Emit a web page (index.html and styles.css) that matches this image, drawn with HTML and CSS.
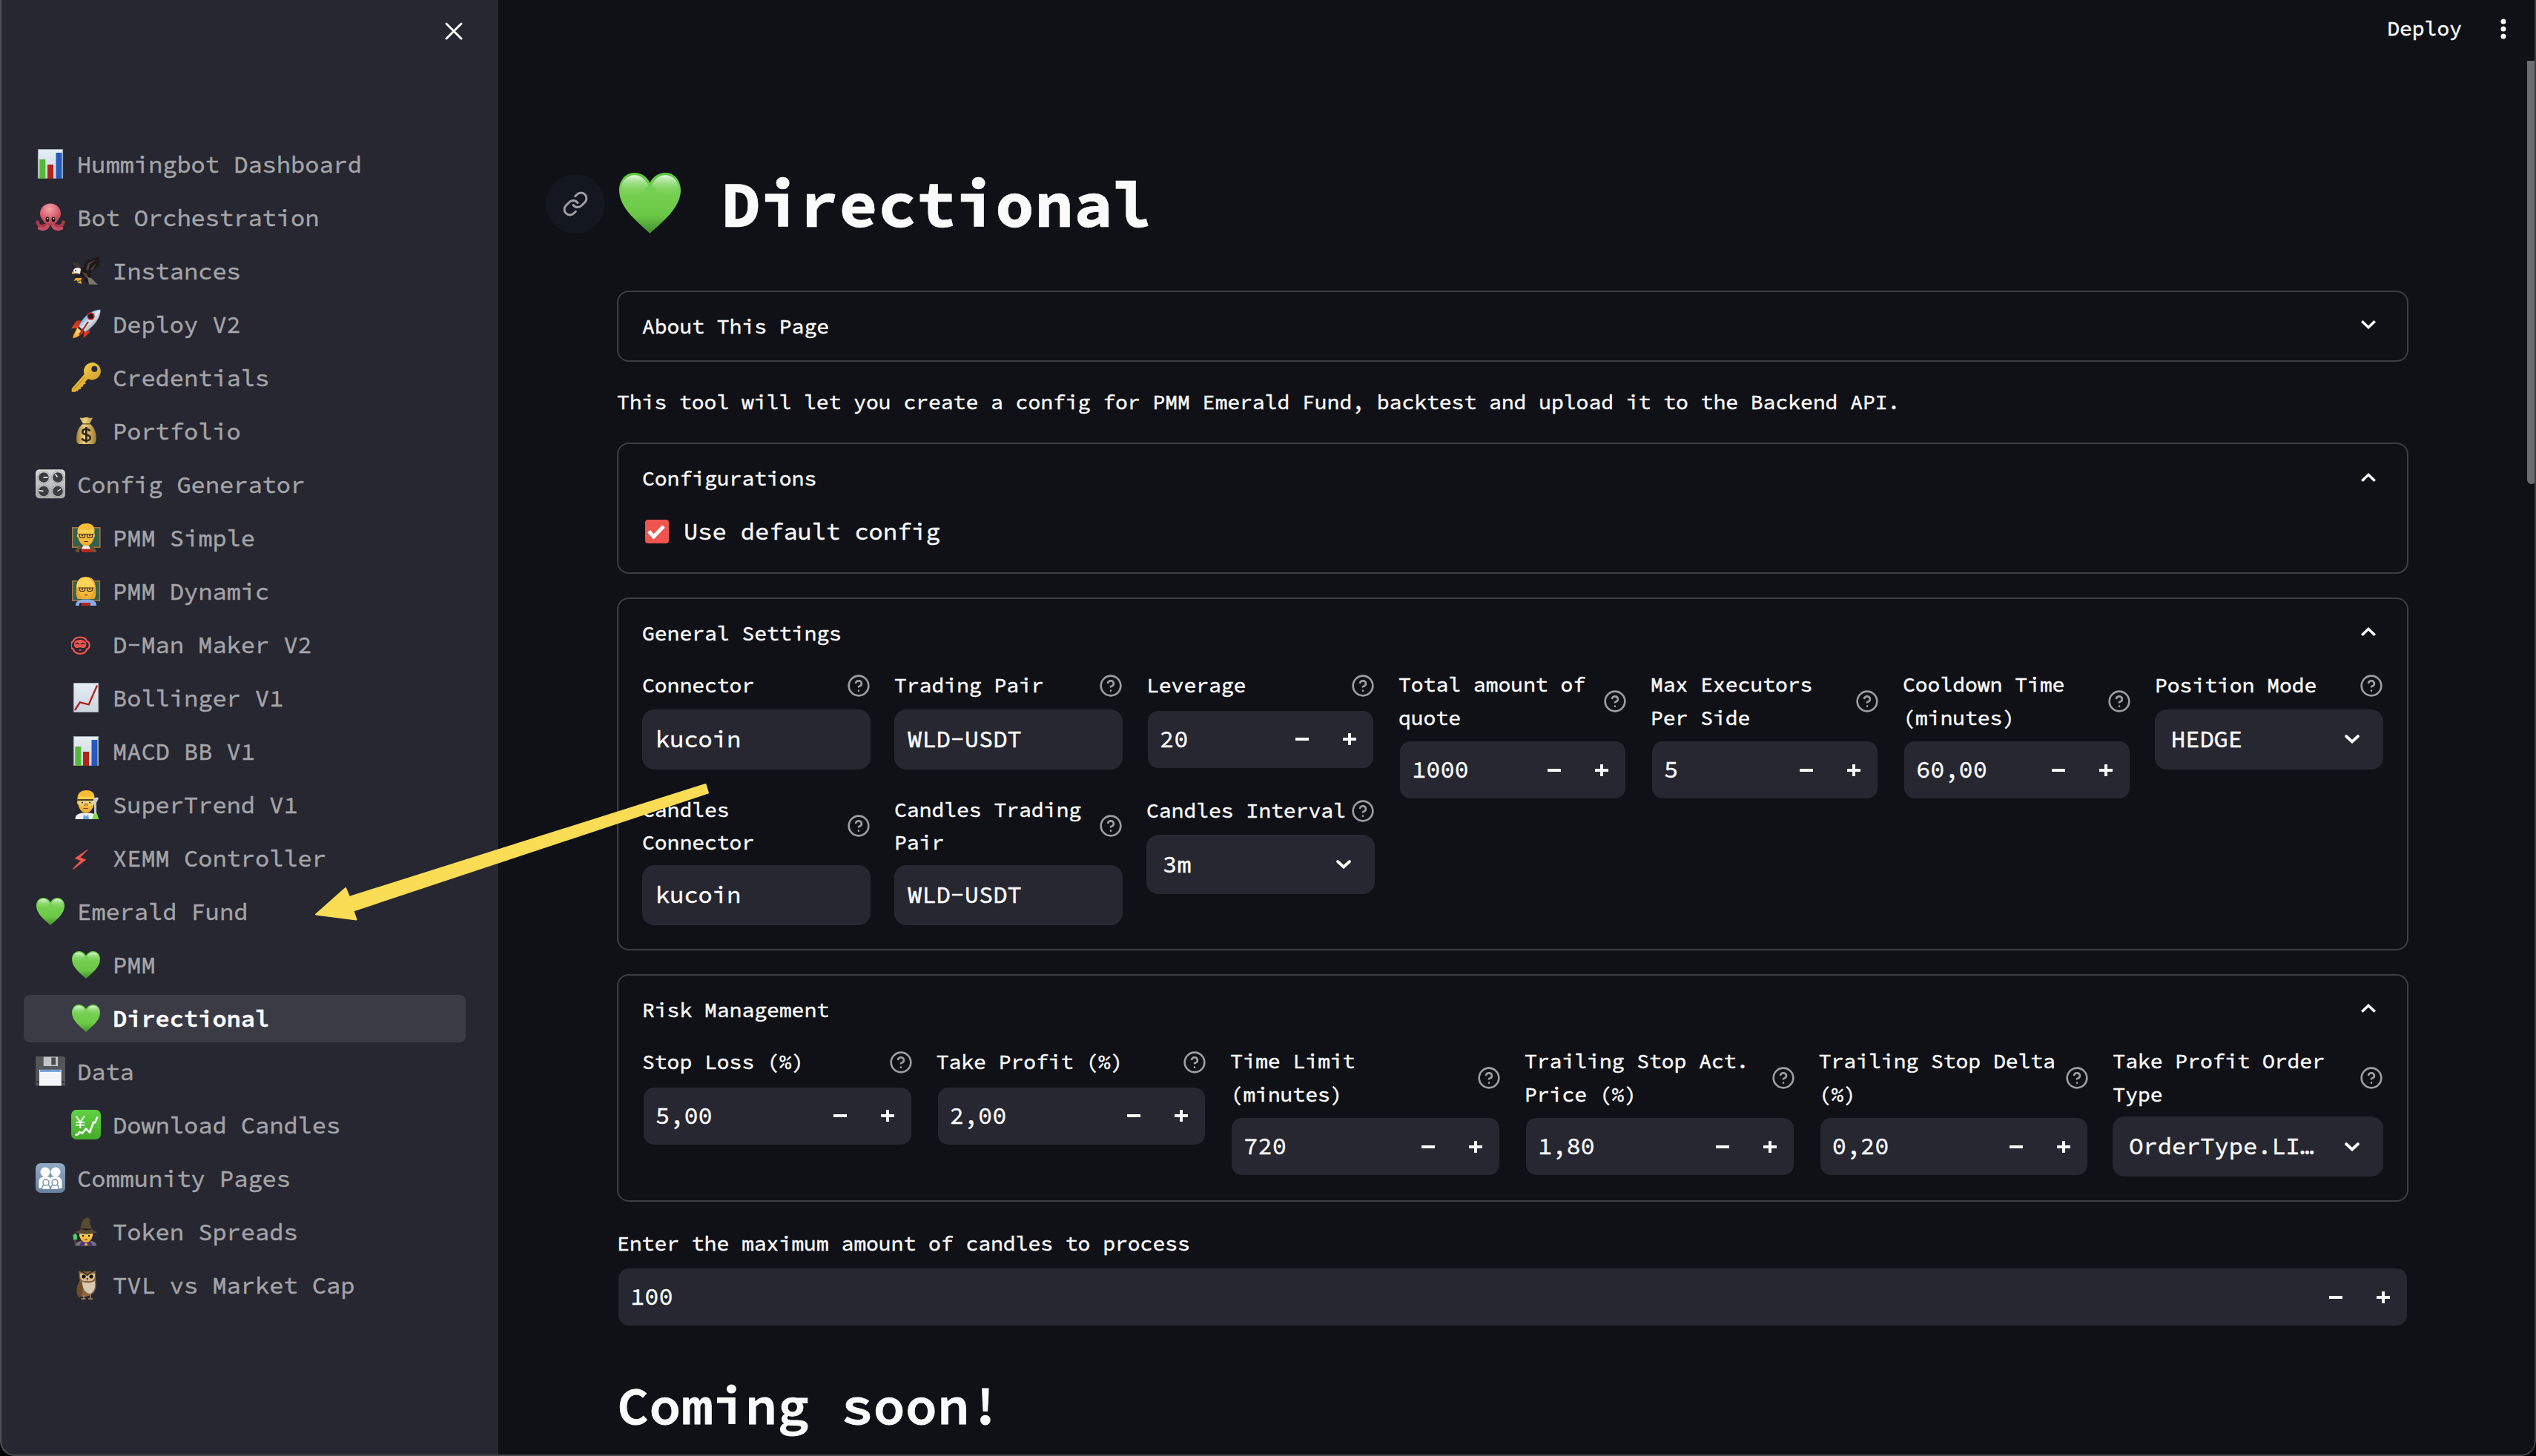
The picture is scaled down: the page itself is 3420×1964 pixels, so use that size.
FILE: index.html
```
<!DOCTYPE html>
<html lang="en">
<head>
<meta charset="utf-8">
<title>Directional</title>
<link rel="stylesheet" href="styles.css">
</head>
<body>
<svg class="defs" aria-hidden="true">
  <defs>
    <linearGradient id="paper" x1="0" y1="0" x2="0" y2="1"><stop offset="0" stop-color="#e6edf5"/><stop offset="1" stop-color="#ccd6df"/></linearGradient>
    <radialGradient id="pink" cx=".45" cy=".25" r=".8"><stop offset="0" stop-color="#f4a3ab"/><stop offset=".55" stop-color="#d9606f"/><stop offset="1" stop-color="#a93549"/></radialGradient>
    <linearGradient id="gold" x1="0" y1="0" x2="1" y2="1"><stop offset="0" stop-color="#fbdc55"/><stop offset="1" stop-color="#c98f1c"/></linearGradient>
    <linearGradient id="sack" x1="0" y1="0" x2="1" y2="0"><stop offset="0" stop-color="#a57b2e"/><stop offset=".4" stop-color="#efd586"/><stop offset="1" stop-color="#a57b2e"/></linearGradient>
    <linearGradient id="metal" x1="0" y1="0" x2="0" y2="1"><stop offset="0" stop-color="#d4d6d8"/><stop offset="1" stop-color="#a9abad"/></linearGradient>
    <linearGradient id="skin" x1="0" y1="0" x2="0" y2="1"><stop offset="0" stop-color="#ffdf64"/><stop offset="1" stop-color="#f0ab2b"/></linearGradient>
    <linearGradient id="hull" x1="0" y1="0" x2="1" y2="1"><stop offset=".2" stop-color="#4a8fd8"/><stop offset=".5" stop-color="#e3ecf4"/><stop offset=".8" stop-color="#8599a8"/></linearGradient>
    <linearGradient id="flame" x1="1" y1="0" x2="0" y2="1"><stop offset="0" stop-color="#fff6b0"/><stop offset="1" stop-color="#f7a21c"/></linearGradient>
    <linearGradient id="fin" x1="1" y1="0" x2="0" y2="1"><stop offset="0" stop-color="#b81c18"/><stop offset="1" stop-color="#ff5a24"/></linearGradient>
    <linearGradient id="leaf" x1="0" y1="0" x2="0" y2="1"><stop offset="0" stop-color="#5cc93f"/><stop offset=".3" stop-color="#77d153"/><stop offset=".7" stop-color="#6bc846"/><stop offset="1" stop-color="#3f8f2e"/></linearGradient>
    <linearGradient id="shine" x1="0" y1="0" x2="0" y2="1"><stop offset="0" stop-color="#eefbe8" stop-opacity=".95"/><stop offset="1" stop-color="#77d153" stop-opacity="0"/></linearGradient>
    <linearGradient id="slate" x1="0" y1="0" x2="0" y2="1"><stop offset="0" stop-color="#91aac6"/><stop offset="1" stop-color="#6a829c"/></linearGradient>
    <linearGradient id="green" x1="0" y1="0" x2="0" y2="1"><stop offset="0" stop-color="#62d145"/><stop offset="1" stop-color="#45ab2c"/></linearGradient>
  </defs>
  <symbol id="bars" viewBox="0 0 40 40">
    <path fill="url(#paper)" stroke="#a4adb5" stroke-width=".8" d="M3.4.4h33.2v39.2H3.4z"/>
    <path fill="#55b937" d="M5.3 14h8v26h-8z"/><path fill="#b1241a" d="M16 21h8v19h-8z"/><path fill="#2459be" d="M27.5 5h8v35h-8z"/>
  </symbol>
  <symbol id="line-chart" viewBox="0 0 40 40">
    <path fill="url(#paper)" stroke="#a4adb5" stroke-width=".8" d="M3.4.4h33.2v39.2H3.4z"/>
    <path fill="none" stroke="#b1241a" stroke-width="2.4" d="M5 37l6.8-10.600 11.900 3L35 3.500"/>
  </symbol>
  <symbol id="octopus" viewBox="0 0 40 40">
    <path fill="none" stroke="#a9384b" stroke-width="4.500" stroke-linecap="round" d="M2.500 26.500c1 6 7 7 12 4M37.500 26.500c-1 6-7 7-12 4"/>
    <path fill="none" stroke="#c25061" stroke-width="4.500" stroke-linecap="round" d="M5 34.800c5 2.500 10 1 12-4M35 34.800c-5 2.500-10 1-12-4"/>
    <path fill="url(#pink)" d="M20 1.500c8.500 0 14 6.500 14 13.500 0 5-2.500 7-4.500 10-2 3.500-5.500 6-9.500 6s-7.500-2.500-9.500-6C8.500 22 6 20 6 15 6 8 11.500 1.500 20 1.500z"/>
    <ellipse cx="16" cy="22.800" rx="2.400" ry="3.400" fill="#1d1014"/><ellipse cx="24" cy="22.800" rx="2.400" ry="3.400" fill="#1d1014"/>
    <circle cx="16.500" cy="22" r=".9" fill="#fff"/><circle cx="24.500" cy="22" r=".9" fill="#fff"/>
  </symbol>
  <symbol id="eagle" viewBox="0 0 40 40">
    <path fill="#3f332e" d="M14 20C12 16 4 15 .5 8.500L4 10 3.500 8l4 2.500L8 8.500l3 3 3 8.500z"/>
    <path fill="#1e1918" d="M13 21L17 15 20 8C24 5 32 3 39 .5L36 4l4 .5-3.500 2.500 3.500.5-3.500 2.500 3 1.500-4 1 2.500 2-4.500.5 1.500 2.500-5 .5-3 5-1 7 2 7-8-1-3-7-6-2z"/>
    <path fill="#54443d" d="M20 18l3-8 10-5-8 7-2 9zM26 18l8-8-6 10zM15 22l6 2 3 7-5-2z"/>
    <path fill="#7d756d" d="M22 29l5 1 9 9-12-.5z"/>
    <path fill="#f2f0ea" d="M3 19c3-4 8-3.500 10-1l-1 6.500-6-1-3 1z"/><circle cx="6" cy="20" r=".9" fill="#222"/>
    <path fill="#e9aa2b" d="M4 20l-3 2v3l3-2zM14 30l-8 0-2.500 4 4-1 1 2 5.500-3zM13 33l-5 4h3l3 1z"/>
  </symbol>
  <symbol id="rocket" viewBox="0 0 40 40">
    <path fill="url(#fin)" d="M15.500 15.500H7.500L0 26l10-1zM25.500 25l-1 7-8 7 1-9z"/>
    <path fill="url(#flame)" stroke="#ee7c1b" stroke-width=".8" d="M8 25c-1 5-5 8-5.500 14C8 38 12 35 15.500 31z"/>
    <path fill="url(#hull)" stroke="#35506e" stroke-width=".5" d="M39.500.8C40 10 33 22 19 31l-9-8C17 8 29 .5 39.500.8z"/>
    <path fill="#bd2118" d="M22 16.500l2 1L12 35l-2-1z"/>
    <circle cx="26.500" cy="9.500" r="5.200" fill="#d52b24"/><circle cx="26.500" cy="9.500" r="3.600" fill="#211b20"/>
  </symbol>
  <symbol id="key" viewBox="0 0 40 40">
    <path fill="url(#gold)" fill-rule="evenodd" d="M28.300 0a11.700 11.700 0 1 1-5.500 22.100l-3.800 4 .5 3-3 .5-.5 3-3 .5 0 3-3 .2-1 2.500-2-.6-1.500 1.600H.7v-4.500l17-19.500A11.700 11.700 0 0 1 28.300 0zm3 4.700a4 4 0 1 0 0 8 4 4 0 0 0 0-8z"/>
    <path stroke="#a3741a" stroke-width="1" d="M3 36.500L18.500 20"/>
  </symbol>
  <symbol id="money" viewBox="0 0 40 40">
    <path fill="url(#sack)" d="M11.500 3c2-1.500 4 .5 6-.5s4-1 6 0 4-1 5.500.5L25 10.500c6 4 9 12 8.700 20 0 5-1.700 7.500-4.700 7.500H12c-3.500 0-5-2-5-7.500 0-8 3-16 9-20z"/>
    <path stroke="#84601f" stroke-width="1.600" d="M15.500 10.800h9.500"/>
    <path fill="none" stroke="#2d2415" stroke-width="2.600" d="M25.300 20.500c-1-2-3-2.700-5-2.700-3 0-5 1.500-5 3.800 0 5.400 10.500 2.400 10.500 7.800 0 2.400-2.300 4-5.500 4-2.800 0-4.800-1-5.800-3.200M20.300 15v21"/>
  </symbol>
  <symbol id="knobs" viewBox="0 0 40 40">
    <rect y=".2" width="40" height="39" rx="5" fill="url(#metal)"/>
    <g fill="none" stroke="#777a7d" stroke-width="1" stroke-dasharray="1 1.500"><circle cx="11" cy="11" r="8.300"/><circle cx="30" cy="11" r="8.300"/><circle cx="11" cy="29.500" r="8.300"/><circle cx="30" cy="29.500" r="8.300"/></g>
    <g fill="#3b3d40"><circle cx="11" cy="11" r="6.800"/><circle cx="30" cy="11" r="6.800"/><circle cx="11" cy="29.500" r="6.800"/><circle cx="30" cy="29.500" r="6.800"/></g>
    <path stroke="#fff" stroke-width="1.400" d="M10.500 11h6M29.500 10.500l-3-4M10.500 29.500l-6-1M29.500 29.500l5-3"/>
  </symbol>
  <symbol id="teacher-m" viewBox="0 0 40 40">
    <path fill="#35604c" stroke="#a9744a" stroke-width="1.600" d="M1.800 6.800h37v26.500h-37z"/>
    <path fill="#6a5129" d="M6 40c0-6 4-7.500 9-8.500h10c5 1 9 2.500 9 8.500z"/><path fill="#f3f0e8" d="M16 31h8l2 5H14z"/>
    <path fill="url(#skin)" d="M9 15C8 6 13 3 20 3s12 3 11 12c1.500 0 1.300 5-.5 5.500C29 27 25 31.500 20 31.500S11 27 9.500 20.500C7.700 20 7.500 15 9 15z"/>
    <path fill="#f4bd37" d="M8.800 15C7 5 13 1 21 1c8 0 12 5 10.200 14-1-3-2-5-3.200-6-6 2-12 1-15 0-2 1-3 3-4.200 6z"/>
    <path fill="none" stroke="#3c2712" stroke-width="1.200" d="M9.500 15.500h21M11.500 15.500v3.500c0 2 7 2 7 0v-3.500M21.500 15.500v3.500c0 2 7 2 7 0v-3.500M17.500 25.500h5"/>
    <circle cx="15" cy="17.500" r="1.100" fill="#2d1c0c"/><circle cx="25" cy="17.500" r="1.100" fill="#2d1c0c"/>
    <path fill="#b92323" d="M12.500 35.500H27V40H13.500z"/><path fill="#1e1b1b" d="M11 36.500l2-1 .8 4.500H11z"/>
  </symbol>
  <symbol id="teacher-f" viewBox="0 0 40 40">
    <path fill="#35604c" stroke="#a9744a" stroke-width="1.600" d="M1.800 6.800h36.500v26.500H1.800z"/>
    <path fill="#e7a62c" d="M20 1c9 0 12 5 13 14 .5 8 .5 13-2 16H9c-2.500-3-2.500-8-2-16C8 6 11 1 20 1z"/>
    <path fill="#86aeea" d="M6 40c0-6 4-7.500 9-8.500h10c5 1 9 2.500 9 8.500z"/>
    <path fill="url(#skin)" d="M10 15c3-2 8-5 10-9 2 5 6 7 10 9 0 9-4 16-10 16s-10-7-10-16z"/>
    <path fill="#ffd557" d="M17 2c6-1 13 3 15 13-6-1-10-4-12-8-3 5-7 7-13 9C7 9 10 3 17 2z"/>
    <path fill="none" stroke="#3c2712" stroke-width="1.200" d="M10 16h20M11.500 16v3c0 2 7 2 7 0v-3M21.500 16v3c0 2 7 2 7 0v-3"/>
    <circle cx="15" cy="17.800" r="1.100" fill="#2d1c0c"/><circle cx="25" cy="17.800" r="1.100" fill="#2d1c0c"/><path stroke="#9a3b22" stroke-width="1.500" d="M18 25.500h4"/>
    <path fill="#b92323" d="M12.500 36H26v4H13.500z"/><path fill="#1e1b1b" d="M11 37l2-1 .8 4H11z"/>
  </symbol>
  <symbol id="scientist" viewBox="0 0 40 40">
    <path fill="#eceef0" d="M5.500 40c0-6 4-7 9-8.500h11c6 1.500 9 2.500 9 8.500z"/><path fill="#6fa3e0" d="M17 34l3 2 3-2 1 6h-8z"/>
    <path fill="url(#skin)" d="M9 15C8 6 13 3 20 3s12 3 11 12c1.500 0 1.300 5-.5 5.500C29 27 25 31.500 20 31.500S11 27 9.500 20.500C7.700 20 7.500 15 9 15z"/>
    <path fill="#f4bd37" d="M8.800 15C7 5 13 1 21 1c8 0 12 5 10.200 14-1-3-2-5-3.200-6-6 2-12 1-15 0-2 1-3 3-4.200 6z"/>
    <path fill="#e6d48c" fill-opacity=".7" d="M10 14h20v6l-4 2h-4l-2-3-2 3h-4l-4-2z"/><path stroke="#2d2113" stroke-width="1.700" d="M9 14h22"/>
    <circle cx="15" cy="17.500" r="1.100" fill="#2d1c0c"/><circle cx="25" cy="17.500" r="1.100" fill="#2d1c0c"/><path fill="none" stroke="#7d4a1c" stroke-width="1.100" d="M18 22l1-2.500h2l1 2.500M16.500 25.500h6"/>
    <path fill="#d9dcdf" fill-opacity=".9" d="M30 13c2-3 6-3 7-1l-3 6v13l3 9h-9l3-9V20c-2-1-2-4-1-7z"/><path fill="#76e03c" d="M31 33h4l2.200 7H28z"/>
  </symbol>
  <symbol id="robot-face" viewBox="0 0 40 40">
    <path fill="none" stroke="#f0544f" stroke-width="2.200" d="M12 10.700c4.500 0 8 2 9.200 5.300 2.600.6 3.400 2.500 3.400 5.300s-.8 4.800-3.400 5.300C20 30.500 16.500 32.800 12 32.800s-8-2.300-9.200-6.200C.2 26.100-.1 24 0 21.300c0-2.800.2-4.700 2.800-5.300C4 12.700 7.500 10.700 12 10.700z"/>
    <path fill="#f0544f" d="M12 14c5.500 0 8.300 2.500 8.300 6s-1.800 5-3.800 5-2.500-.8-4.500-.8-2.500.8-4.500.8-3.800-1.500-3.800-5 2.800-6 8.300-6zM9.800 27.300h4.400c-.4 2-4 2-4.400 0z"/>
    <path fill="none" stroke="#262730" stroke-width="1.500" d="M6 20.500c.8-2.600 3.600-2.600 4.400 0M13.600 20.500c.8-2.600 3.600-2.600 4.400 0"/>
  </symbol>
  <symbol id="bolt" viewBox="0 0 40 40"><path fill="#f0544f" stroke="#f0544f" stroke-width=".6" d="M22 9L5 20.800l8 3L2.300 34.800l1 .4 16.500-12.400-7.800-3L22.300 9.300z"/></symbol>
  <symbol id="heart" viewBox="1 2 38 36.500" preserveAspectRatio="none">
    <path fill="url(#leaf)" d="M20 38.500C13 32 1 23.500 1 12.500 1 6.500 5 2 10.500 2c4 0 7.500 2.300 9.500 6 2-3.700 5.500-6 9.500-6C35 2 39 6.500 39 12.500 39 23.500 27 32 20 38.500z"/>
    <path fill="url(#shine)" d="M10.500 3.500c4 0 7 2.800 8.500 6.500-3 2-5 6-9 6s-7.500-1-7.500-5c0-4.500 4-7.500 8-7.500zM29.500 3.500c-4 0-7 2.800-8.500 6.500 3 2 5 6 9 6s7.500-1 7.500-5c0-4.500-4-7.500-8-7.500z"/>
  </symbol>
  <symbol id="floppy" viewBox="0 0 40 40">
    <path fill="#55565a" d="M0 0h38l2 2v37.600H0z"/><path fill="#c2c4c7" d="M10.700.5H30V13H10.700z"/><path fill="#4a4b4f" d="M21.300 1.500H27V11.500h-5.700z"/>
    <path fill="#f3f4f6" d="M5 17.900h29.700v21.700H5z"/><path fill="#5a94d2" d="M6 18.300h27.700v2.500H6z"/><path fill="#333438" d="M1.500 33H4v3H1.500zM36 33h2.500v3H36z"/>
  </symbol>
  <symbol id="yen-chart" viewBox="0 0 40 40">
    <rect width="40" height="40" rx="7" fill="url(#green)"/>
    <path fill="none" stroke="#fff" stroke-width="1.800" d="M6.500 8.500l5.700 8 5.700-8M12.200 16v9M6.500 17h11.500M6.500 20.700h11.500"/>
    <path fill="none" stroke="#fff" stroke-width="2.500" stroke-linejoin="round" d="M5.500 34l4-1 1.500-3 4 1.500 5-6 5 5 3-8 2-6 2 1 3.500-8"/>
  </symbol>
  <symbol id="family" viewBox="0 0 40 40">
    <rect width="40" height="40" rx="7" fill="url(#slate)"/>
    <g fill="#fff"><circle cx="13" cy="12" r="6.500"/><circle cx="27" cy="12" r="6.500"/><path d="M4.500 34V25c0-5 3.500-7 8.500-7 3 0 5.500.5 7 2 1.500-1.500 4-2 7-2 5 0 8.500 2 8.500 7v9z"/></g>
    <g fill="#fff" stroke="#7088a4" stroke-width="1.300"><path d="M8.500 35.500c0-5 2-7 5.500-7s5.700 2 5.700 7zM20.300 35.500c0-5 2-7 5.700-7s5.500 2 5.500 7z"/><circle cx="14" cy="26" r="4"/><circle cx="26" cy="26" r="4"/></g>
  </symbol>
  <symbol id="wizard" viewBox="0 0 40 40">
    <path fill="#77727f" d="M6 39.500c0-5 4-6 9-7h10c5 1 9 2 9 7z"/><path fill="#4f3277" d="M14 33h12l3 6.500h-4l-5-3-5 3h-4z"/><path fill="#e7b43a" d="M18.500 36h3v3h-3z"/>
    <path fill="url(#skin)" d="M11 20h18c1 8-3 15-9 15s-10-7-9-15z"/><path fill="#c7cdd4" d="M10.500 21h4l-2 5zM29.500 21h-4l2 5z"/>
    <circle cx="16" cy="26" r="1.200" fill="#2b1c0e"/><circle cx="24" cy="26" r="1.200" fill="#2b1c0e"/><path stroke="#8d4a1d" stroke-width="1.300" d="M18 31h4"/>
    <path fill="#594a35" d="M4.500 21c3-1 6-2 8-4C13 10 15 3 21 1.500c3 0 5 2 6 5l-3-1c2 4 3 9 4 11.500 2 2 5 3 7.500 4-8 3.500-22 3.500-31 0z"/><path stroke="#3c3021" stroke-width="1.300" d="M12.500 16.500c4 2 11 2 15.500.3"/>
    <path stroke="#6f4b2c" stroke-width="2" d="M5 31l1 8.500"/><path fill="#4bcf6c" d="M2.500 25l3-2.500 2.500 3v5.500l-5 .5z"/>
  </symbol>
  <symbol id="owl" viewBox="0 0 40 40">
    <path fill="#8b6543" d="M10 1c3 1.500 16 1.500 23 0-1 3 0 7 0 10 1 8 1.500 15-3 20-4 4-13 7-18 4C6 31 7 21 12 14c-2-4-1-9-2-13z"/>
    <path fill="#d9cab4" d="M15 16c5 2 12 2 17-1 1 9-1 14-6 17-6 0-11-6-11-16z"/><path fill="#6f4a2b" d="M12 15c4 7 5 12 2 19l-3 4c-5-6-5-15 1-23z"/>
    <path fill="#d3bb95" d="M12 5c4-1 6 0 9.500 4C24 5 28 4 32 5c1 7-3 10-6 10h-8c-4 0-7-4-6-10z"/>
    <circle cx="17" cy="9" r="3" fill="#c98a2a"/><circle cx="27" cy="9" r="3" fill="#c98a2a"/><circle cx="17" cy="9" r="2.400" fill="#14100d"/><circle cx="27" cy="9" r="2.400" fill="#14100d"/>
    <path fill="#3a2a1c" d="M10 1c5 0 9 2 11.700 5C24.500 3 28 1 33 1c-4 2-8 3-11.300 7C18 4 14 3 10 1zM20.500 11h2.400l-1.200 4z"/>
    <path stroke="#a88a60" stroke-width="1.500" d="M17 34v4.500M26 33v5.500M13.500 39h6M23 39h6"/>
  </symbol>
  <symbol id="help" viewBox="0 0 24 24"><g fill="none" stroke="#9c9da0" stroke-width="2" stroke-linecap="round" stroke-linejoin="round"><circle cx="12" cy="12" r="10"/><path d="M9.090 9a3 3 0 0 1 5.830 1c0 2-3 3-3 3M12 17h.01"/></g></symbol>
  <symbol id="down" viewBox="0 0 20 12"><path fill="#fafafa" d="M0 2.600L2.600 0 10 7.200 17.400 0 20 2.600 10 12z"/></symbol>
  <symbol id="caret" viewBox="0 0 20 12"><path fill="none" stroke="#fafafa" stroke-width="4" stroke-linecap="round" d="M2.200 2.200L10 9.400l7.800-7.200"/></symbol>
  <symbol id="minus" viewBox="0 0 18 18"><path fill="#fafafa" d="M0 7h18v4H0z"/></symbol>
  <symbol id="plus" viewBox="0 0 18 18"><path fill="#fafafa" d="M0 7h7V1h4v6h7v4h-7v6H7v-6H0z"/></symbol>
</svg>

<div class="app">
  <aside class="sidebar">
    <div class="sidebar-head"><svg class="close" viewBox="0 0 24 24"><path d="M2 2l20 20M22 2L2 22"/></svg></div>
    <nav class="nav">
      <a class="item"><svg><use href="#bars"/></svg>Hummingbot Dashboard</a>
      <a class="item"><svg><use href="#octopus"/></svg>Bot Orchestration</a>
      <a class="item sub"><svg><use href="#eagle"/></svg>Instances</a>
      <a class="item sub"><svg><use href="#rocket"/></svg>Deploy V2</a>
      <a class="item sub"><svg><use href="#key"/></svg>Credentials</a>
      <a class="item sub"><svg><use href="#money"/></svg>Portfolio</a>
      <a class="item"><svg><use href="#knobs"/></svg>Config Generator</a>
      <a class="item sub"><svg><use href="#teacher-m"/></svg>PMM Simple</a>
      <a class="item sub"><svg><use href="#teacher-f"/></svg>PMM Dynamic</a>
      <a class="item sub"><svg><use href="#robot-face"/></svg>D-Man Maker V2</a>
      <a class="item sub"><svg><use href="#line-chart"/></svg>Bollinger V1</a>
      <a class="item sub"><svg><use href="#bars"/></svg>MACD BB V1</a>
      <a class="item sub"><svg><use href="#scientist"/></svg>SuperTrend V1</a>
      <a class="item sub"><svg><use href="#bolt"/></svg>XEMM Controller</a>
      <a class="item"><svg class="love"><use href="#heart"/></svg>Emerald Fund</a>
      <a class="item sub"><svg class="love"><use href="#heart"/></svg>PMM</a>
      <a class="item sub active"><svg class="love"><use href="#heart"/></svg>Directional</a>
      <a class="item"><svg><use href="#floppy"/></svg>Data</a>
      <a class="item sub"><svg><use href="#yen-chart"/></svg>Download Candles</a>
      <a class="item"><svg><use href="#family"/></svg>Community Pages</a>
      <a class="item sub"><svg><use href="#wizard"/></svg>Token Spreads</a>
      <a class="item sub"><svg><use href="#owl"/></svg>TVL vs Market Cap</a>
    </nav>
  </aside>

  <main class="main">
    <header class="toolbar">
      <span>Deploy</span>
      <svg class="dots" viewBox="0 0 8 28"><circle cx="4" cy="4" r="3.500"/><circle cx="4" cy="14" r="3.500"/><circle cx="4" cy="24" r="3.500"/></svg>
    </header>

    <div class="content">
      <h1 class="title">
        <span class="anchor"><svg viewBox="0 0 24 24"><path d="M10 13a5 5 0 0 0 7.540.540l3-3a5 5 0 0 0-7.070-7.070l-1.720 1.710"/><path d="M14 11a5 5 0 0 0-7.540-.540l-3 3a5 5 0 0 0 7.070 7.070l1.710-1.710"/></svg></span>
        <svg class="title-heart"><use href="#heart"/></svg>Directional
      </h1>

      <section class="expander"><div class="summary">About This Page<svg><use href="#down"/></svg></div></section>

      <p class="intro">This tool will let you create a config for PMM Emerald Fund, backtest and upload it to the Backend API.</p>

      <section class="expander">
        <div class="summary open">Configurations<svg><use href="#down"/></svg></div>
        <div class="panel"><div class="check"><svg viewBox="0 0 32 32"><path d="M5 15.500l6.500 7.500L25 9"/></svg>Use default config</div></div>
      </section>

      <section class="expander">
        <div class="summary open">General Settings<svg><use href="#down"/></svg></div>
        <div class="panel columns">
          <div class="col">
            <div><div class="label">Connector<svg><use href="#help"/></svg></div><div class="text">kucoin</div></div>
            <div><div class="label"><span>Candles<br>Connector</span><svg><use href="#help"/></svg></div><div class="text">kucoin</div></div>
          </div>
          <div class="col">
            <div><div class="label">Trading Pair<svg><use href="#help"/></svg></div><div class="text">WLD-USDT</div></div>
            <div><div class="label"><span>Candles Trading<br>Pair</span><svg><use href="#help"/></svg></div><div class="text">WLD-USDT</div></div>
          </div>
          <div class="col">
            <div><div class="label">Leverage<svg><use href="#help"/></svg></div><div class="number"><span>20</span><svg><use href="#minus"/></svg><svg><use href="#plus"/></svg></div></div>
            <div><div class="label">Candles Interval<svg><use href="#help"/></svg></div><div class="select">3m<svg><use href="#caret"/></svg></div></div>
          </div>
          <div class="col">
            <div><div class="label"><span>Total amount of<br>quote</span><svg><use href="#help"/></svg></div><div class="number"><span>1000</span><svg><use href="#minus"/></svg><svg><use href="#plus"/></svg></div></div>
          </div>
          <div class="col">
            <div><div class="label"><span>Max Executors<br>Per Side</span><svg><use href="#help"/></svg></div><div class="number"><span>5</span><svg><use href="#minus"/></svg><svg><use href="#plus"/></svg></div></div>
          </div>
          <div class="col">
            <div><div class="label"><span>Cooldown Time<br>(minutes)</span><svg><use href="#help"/></svg></div><div class="number"><span>60,00</span><svg><use href="#minus"/></svg><svg><use href="#plus"/></svg></div></div>
          </div>
          <div class="col">
            <div><div class="label">Position Mode<svg><use href="#help"/></svg></div><div class="select">HEDGE<svg><use href="#caret"/></svg></div></div>
          </div>
        </div>
      </section>

      <section class="expander">
        <div class="summary open">Risk Management<svg><use href="#down"/></svg></div>
        <div class="panel columns">
          <div class="col"><div><div class="label">Stop Loss (%)<svg><use href="#help"/></svg></div><div class="number"><span>5,00</span><svg><use href="#minus"/></svg><svg><use href="#plus"/></svg></div></div></div>
          <div class="col"><div><div class="label">Take Profit (%)<svg><use href="#help"/></svg></div><div class="number"><span>2,00</span><svg><use href="#minus"/></svg><svg><use href="#plus"/></svg></div></div></div>
          <div class="col"><div><div class="label"><span>Time Limit<br>(minutes)</span><svg><use href="#help"/></svg></div><div class="number"><span>720</span><svg><use href="#minus"/></svg><svg><use href="#plus"/></svg></div></div></div>
          <div class="col"><div><div class="label"><span>Trailing Stop Act.<br>Price (%)</span><svg><use href="#help"/></svg></div><div class="number"><span>1,80</span><svg><use href="#minus"/></svg><svg><use href="#plus"/></svg></div></div></div>
          <div class="col"><div><div class="label"><span>Trailing Stop Delta<br>(%)</span><svg><use href="#help"/></svg></div><div class="number"><span>0,20</span><svg><use href="#minus"/></svg><svg><use href="#plus"/></svg></div></div></div>
          <div class="col"><div><div class="label"><span>Take Profit Order<br>Type</span><svg><use href="#help"/></svg></div><div class="select">OrderType.LI…<svg><use href="#caret"/></svg></div></div></div>
        </div>
      </section>

      <div>
        <div class="label">Enter the maximum amount of candles to process</div>
        <div class="number"><span>100</span><svg><use href="#minus"/></svg><svg><use href="#plus"/></svg></div>
      </div>

      <h2 class="soon">Coming soon!</h2>
    </div>
  </main>
</div>

<div class="scrollbar"></div>
<svg class="arrow" viewBox="0 0 540 200"><path d="M3 180.500L43 145l5 12L528.500 5l3.500 11.500L53.500 175.500l4 12z"/></svg>
<div class="frame"></div>
</body>
</html>
```
FILE: styles.css
```
* { box-sizing: border-box; }
html { background: #000; }
body {
  margin: 0;
  position: relative;
  width: 3420px;
  height: 1964px;
  overflow: hidden;
  background: #0f1116;
  border-radius: 0 0 20px 20px;
  color: #fafafa;
  font: 400 28px/44.8px "Source Code Pro", "Liberation Mono", monospace;
  -webkit-text-stroke: .5px currentColor;
}
svg { display: block; flex: none; }
.defs { position: absolute; width: 0; height: 0; }

.app { display: flex; height: 1964px; }

/* sidebar */
.sidebar { width: 672px; flex: none; background: #262730; padding: 0 44px 0 32px; }
.sidebar-head { display: flex; justify-content: flex-end; height: 190px; padding-top: 30px; }
.close { width: 24px; height: 24px; margin-right: 4px; fill: none; stroke: #fafafa; stroke-width: 3; stroke-linecap: round; }
.nav { display: flex; flex-direction: column; gap: 8px; }
.item {
  display: flex;
  align-items: center;
  gap: 16px;
  height: 64px;
  padding-left: 16px;
  border-radius: 8px;
  color: #a4a4a8;
  font-size: 32px;
  line-height: 64px;
  white-space: pre;
}
.item svg { width: 40px; height: 40px; margin-bottom: 2px; overflow: visible; }
.item .love { width: 38px; height: 37px; margin: 0 1px 1px; }
.sub { padding-left: 64px; }
.active { background: #3b3b45; color: #fff; font-weight: 600; }

/* page */
.main { flex: 1; min-width: 0; }
.toolbar { display: flex; justify-content: flex-end; align-items: center; gap: 52px; height: 77px; padding-right: 40px; }
.dots { width: 8px; height: 28px; fill: #fafafa; }
.content { display: flex; flex-direction: column; gap: 32px; padding: 105px 172px 0 160px; }

.title {
  position: relative;
  display: flex;
  align-items: center;
  margin: 0;
  padding: 40px 0 32px;
  font-size: 88px;
  font-weight: 700;
  line-height: 105.6px;
}
.anchor {
  position: absolute;
  left: -96px;
  top: 53px;
  display: grid;
  place-items: center;
  width: 80px;
  height: 80px;
  border-radius: 50%;
  background: #131720;
}
.anchor svg { width: 36px; height: 36px; fill: none; stroke: #a0a0a3; stroke-width: 2; stroke-linecap: round; stroke-linejoin: round; }
.title-heart { width: 83px; height: 82px; margin: 0 55px 2px 2.500px; }

.expander { border: 2px solid #3e3f44; border-radius: 16px; }
.summary { display: flex; justify-content: space-between; align-items: center; height: 92.8px; padding: 0 42px 0 32px; }
.summary svg { width: 20px; height: 12px; margin-bottom: 4px; }
.summary.open svg { transform: scaleY(-1); }
.panel { padding: 0 32px 32px; }
.intro { margin: 0; }

.check { display: flex; align-items: center; gap: 20px; height: 48px; padding: 3px 0 0 4px; font-size: 32px; }
.check svg { width: 32px; height: 32px; border-radius: 4px; background: #f0544f; fill: none; stroke: #fafafa; stroke-width: 5; }

.columns { display: flex; gap: 32px; }
.col { flex: 1 1 0; min-width: 0; display: flex; flex-direction: column; gap: 32px; }
.label { display: flex; justify-content: space-between; align-items: center; min-height: 48px; margin-bottom: 8px; white-space: nowrap; }
.label svg { width: 32px; height: 32px; margin-left: -32px; }

.text, .number, .select {
  display: flex;
  align-items: center;
  height: 80.8px;
  border-radius: 16px;
  background: #262730;
  font-size: 32px;
}
.text { padding-left: 18px; }
.number { border: 2px solid transparent; background-clip: padding-box; padding: 0 23px 0 16px; gap: 46px; }
.number span { flex: 1; }
.number svg { width: 18px; height: 18px; }
.select { justify-content: space-between; padding: 0 32px 0 22px; }
.select svg { width: 20px; height: 12px; }

.soon { margin: 31px 0 0; font-size: 72px; font-weight: 600; line-height: 86.4px; -webkit-text-stroke-width: 1px; }

/* overlays */
.scrollbar { position: absolute; right: 0; top: 82px; width: 12px; height: 571px; border-radius: 0 0 6px 6px; background: #6b6c70; }
.arrow { position: absolute; left: 423px; top: 1053px; width: 540px; height: 200px; fill: #fadd55; stroke: #fadd55; stroke-width: 2; stroke-linejoin: round; }
.frame { position: absolute; inset: 0; border: 2px solid #505158; border-top: 0; border-right-color: #3c3d41; border-bottom-color: #46474c; border-radius: 0 0 20px 20px; }
```
